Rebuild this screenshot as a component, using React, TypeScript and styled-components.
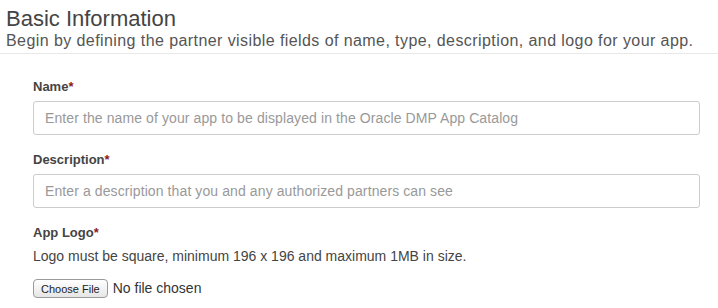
import React from 'react';
import styled, { createGlobalStyle } from 'styled-components';

const GlobalStyle = createGlobalStyle`
  html, body {
    margin: 0;
    padding: 0;
    background: #fff;
  }
  body {
    font-family: 'Liberation Sans', Arial, Helvetica, sans-serif;
    color: #333;
  }
`;

export default function App() {
  return (
    <>
      <GlobalStyle />
      <Section>
        <Header>
          <Title>Basic Information</Title>
          <Subtitle>
            Begin by defining the partner visible fields of name, type,
            description, and logo for your app.
          </Subtitle>
        </Header>

        <Form>
          <Field>
            <Label>
              Name<Required>*</Required>
            </Label>
            <TextInput placeholder="Enter the name of your app to be displayed in the Oracle DMP App Catalog" />
          </Field>

          <Field>
            <Label>
              Description<Required>*</Required>
            </Label>
            <TextInput placeholder="Enter a description that you and any authorized partners can see" />
          </Field>

          <Field>
            <Label>
              App Logo<Required>*</Required>
            </Label>
            <Help>
              Logo must be square, minimum 196 x 196 and maximum 1MB in size.
            </Help>
            <FileInput type="file" />
          </Field>
        </Form>
      </Section>
    </>
  );
}

const Section = styled.div`
  width: 718px;
`;

const Header = styled.header`
  padding: 6px 0 3px 6px;
  border-bottom: 1px solid #e8e8e8;
`;

const Title = styled.h2`
  margin: 0;
  font-size: 22px;
  line-height: 25px;
  font-weight: 400;
  color: #444;
`;

const Subtitle = styled.p`
  margin: 0;
  font-size: 16px;
  line-height: 19px;
  letter-spacing: 0.42px;
  color: #555;
`;

const Form = styled.div`
  display: flex;
  flex-direction: column;
  gap: 16px;
  padding: 24px 18px 0 33px;
`;

const Field = styled.div`
  display: flex;
  flex-direction: column;
  gap: 5px;
`;

const Label = styled.label`
  font-size: 13px;
  line-height: 18px;
  font-weight: 700;
  color: #444;
`;

const Required = styled.span`
  color: #8b1a1a;
`;

const TextInput = styled.input`
  box-sizing: border-box;
  height: 34px;
  width: 100%;
  padding: 0 11px;
  border: 1px solid #ccc;
  border-radius: 3px;
  font-family: 'Liberation Sans', Arial, sans-serif;
  font-size: 14px;
  letter-spacing: 0.1px;
  color: #333;
  outline: none;

  &::placeholder {
    color: #999;
  }
`;

const Help = styled.div`
  font-size: 14px;
  line-height: 18px;
  color: #444;
`;

const FileInput = styled.input`
  margin-top: 9px;
  font-family: 'Liberation Sans', Arial, sans-serif;
  font-size: 14px;
  color: #333;

  &::file-selector-button {
    font-family: 'Liberation Sans', Arial, sans-serif;
    font-size: 11px;
    height: 19px;
    padding: 0 7px;
    margin-right: 5px;
    border: 1px solid #9a9a9a;
    border-radius: 4px;
    background: linear-gradient(#ffffff, #e6e6e6);
    color: #222;
  }
`;
